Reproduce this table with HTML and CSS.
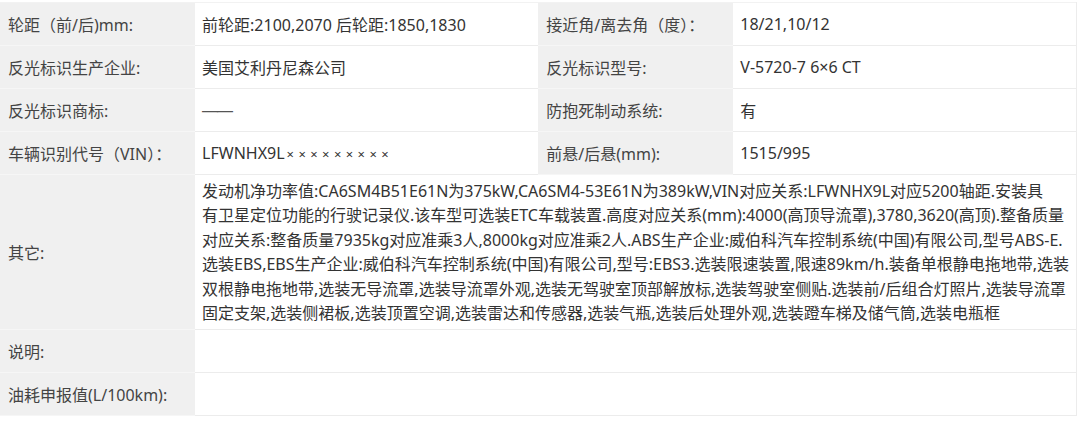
FILE: index.html
```html
<!DOCTYPE html>
<html lang="zh-CN">
<head>
  <meta charset="UTF-8" />
  <meta name="viewport" content="width=device-width, initial-scale=1.0"/>
  <title>车辆参数</title>
  <link rel="stylesheet" href="styles.css">
</head>
<body>
  <table class="spec-table">
    <colgroup>
      <col class="col-label" />
      <col class="col-value" />
      <col class="col-label" />
      <col class="col-value" />
    </colgroup>
    <tr>
      <td class="label">轮距（前/后)mm:</td>
      <td class="value">前轮距:2100,2070 后轮距:1850,1830</td>
      <td class="label">接近角/离去角（度）：</td>
      <td class="value">18/21,10/12</td>
    </tr>
    <tr>
      <td class="label">反光标识生产企业:</td>
      <td class="value">美国艾利丹尼森公司</td>
      <td class="label">反光标识型号:</td>
      <td class="value">V-5720-7 6×6 CT</td>
    </tr>
    <tr>
      <td class="label">反光标识商标:</td>
      <td class="value"><span class="dash">——</span></td>
      <td class="label">防抱死制动系统:</td>
      <td class="value">有</td>
    </tr>
    <tr>
      <td class="label">车辆识别代号（VIN）：</td>
      <td class="value">LFWNHX9L<span class="mask">×××××××××</span></td>
      <td class="label">前悬/后悬(mm):</td>
      <td class="value">1515/995</td>
    </tr>
    <tr class="tall">
      <td class="label">其它:</td>
      <td class="value long" colspan="3">发动机净功率值:CA6SM4B51E61N为375kW,CA6SM4-53E61N为389kW,VIN对应关系:LFWNHX9L对应5200轴距.安装具<br>有卫星定位功能的行驶记录仪.该车型可选装ETC车载装置.高度对应关系(mm):4000(高顶导流罩),3780,3620(高顶).整备质量<br>对应关系:整备质量7935kg对应准乘3人,8000kg对应准乘2人.ABS生产企业:威伯科汽车控制系统(中国)有限公司,型号ABS-E.<br>选装EBS,EBS生产企业:威伯科汽车控制系统(中国)有限公司,型号:EBS3.选装限速装置,限速89km/h.装备单根静电拖地带,选装<br>双根静电拖地带,选装无导流罩,选装导流罩外观,选装无驾驶室顶部解放标,选装驾驶室侧贴.选装前/后组合灯照片,选装导流罩<br>固定支架,选装侧裙板,选装顶置空调,选装雷达和传感器,选装气瓶,选装后处理外观,选装蹬车梯及储气筒,选装电瓶框</td>
    </tr>
    <tr>
      <td class="label">说明:</td>
      <td class="value" colspan="3"></td>
    </tr>
    <tr>
      <td class="label">油耗申报值(L/100km):</td>
      <td class="value" colspan="3"></td>
    </tr>
  </table>
</body>
</html>
```

FILE: styles.css
```css
body {
  margin: 0;
  background: #ffffff;
  font-family: "Noto Sans", "Noto Sans CJK SC", sans-serif;
  font-size: 16px;
  color: #333;
}
.spec-table {
  width: 1077px;
  margin-top: 2px;
  table-layout: fixed;
  border-collapse: collapse;
  border-top: 1px solid #f2f2f2;
  border-right: 1px solid #ececec;
}
.col-label {
  width: 195px;
}
.col-value {
  width: 343px;
}
td {
  height: 43px;
  padding: 0 7px;
  vertical-align: middle;
  white-space: nowrap;
  border-bottom: 1px solid #ececec;
  box-sizing: border-box;
}
.label {
  background: #f0f0f0;
  color: #444;
  padding-left: 8px;
  border-bottom-color: #f6f6f6;
}
.value {
  background: #fff;
  color: #333;
}
.dash {
  font-family: "Liberation Sans", sans-serif;
  letter-spacing: -1px;
  color: #555;
}
.mask {
  margin-left: 2px;
  font-size: 13px;
  letter-spacing: 4.4px;
}
.tall td {
  height: 155px;
}
.long {
  line-height: 24.5px;
}
```
